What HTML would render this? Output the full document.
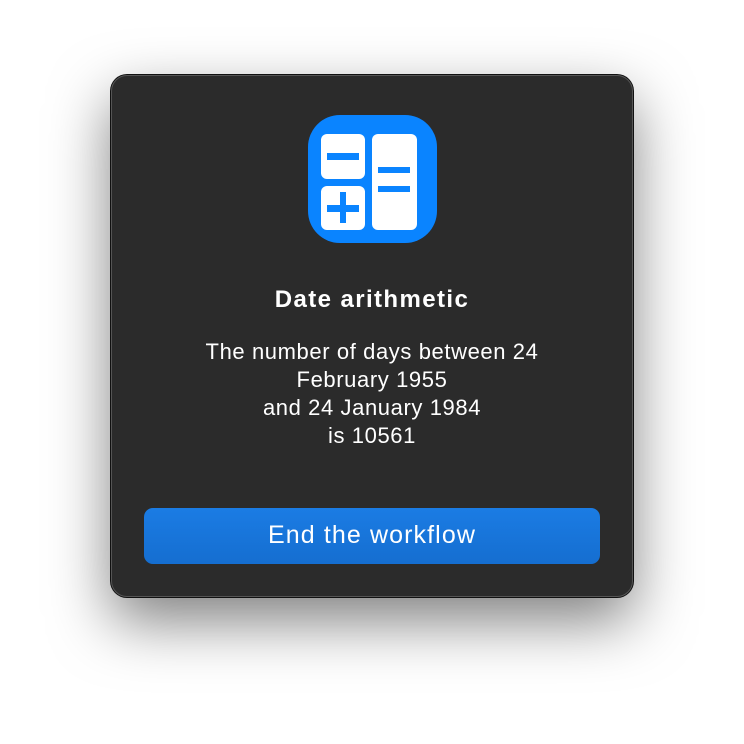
<!DOCTYPE html>
<html><head><style>
html,body{margin:0;padding:0;width:744px;height:744px;background:#fff;overflow:hidden;font-family:"Liberation Sans",sans-serif;}
.win{position:absolute;left:111px;top:75px;width:520px;height:520px;background:#2b2b2b;border:1px solid #555;border-radius:16px;box-shadow:0 0 0 1px #111,0 24px 60px rgba(0,0,0,.5);}
.t{position:absolute;left:0;width:744px;text-align:center;color:#fff;}
.btn{position:absolute;left:144px;top:508px;width:456px;height:56px;border-radius:9px;background:linear-gradient(#1b7ce4,#156ed0);color:#fff;font-size:25px;letter-spacing:1.1px;text-align:center;line-height:54px;}
</style></head><body>
<div class="win"></div>
<svg style="position:absolute;left:0;top:0" width="744" height="744">
<rect x="308" y="115" width="129" height="128" rx="32" fill="#0a84ff"/>
<rect x="321" y="134" width="44" height="45" rx="6" fill="#fff"/>
<rect x="321" y="186" width="44" height="44" rx="6" fill="#fff"/>
<rect x="372" y="134" width="45" height="96" rx="6" fill="#fff"/>
<rect x="327" y="153" width="32" height="7" fill="#0a84ff"/>
<rect x="327" y="205" width="32" height="7" fill="#0a84ff"/>
<rect x="340" y="192" width="6" height="31" fill="#0a84ff"/>
<rect x="378" y="167" width="32" height="6" fill="#0a84ff"/>
<rect x="378" y="186" width="32" height="6" fill="#0a84ff"/>
</svg>
<div class="t" style="top:286px;font-size:24px;letter-spacing:1.4px;font-weight:bold;">Date arithmetic</div>
<div class="t" style="top:338px;font-size:22px;letter-spacing:0.6px;line-height:28px;">The number of days between 24<br>February 1955<br>and 24 January 1984<br>is 10561</div>
<div class="btn">End the workflow</div>
</body></html>
